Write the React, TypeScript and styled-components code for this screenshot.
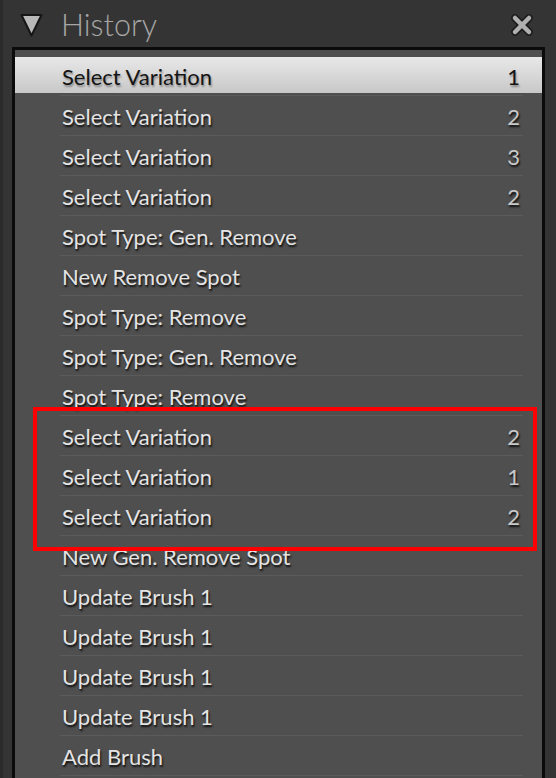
import React from "react";
import styled, { createGlobalStyle } from "styled-components";

const GlobalStyle = createGlobalStyle`
  html, body {
    margin: 0;
    padding: 0;
    background: #333333;
  }
  * { box-sizing: border-box; }
`;

const Panel = styled.div`
  position: relative;
  width: 556px;
  height: 778px;
  overflow: hidden;
  background: #343434;
  border-left: 3px solid #2b2b2b;
  display: flex;
  flex-direction: column;
  font-family: "Lato", "Noto Sans", sans-serif;
`;

const Header = styled.div`
  height: 47px;
  flex: 0 0 47px;
  display: flex;
  align-items: center;
  padding: 3px 22px 0 17px;
`;

const Title = styled.div`
  margin-left: 18px;
  font-size: 30.5px;
  font-weight: 300;
  color: #a6a6a6;
  line-height: 1;
  padding-bottom: 2px;
`;

const Close = styled.div`
  margin-left: auto;
  display: flex;
  padding-bottom: 1px;
`;

const ListBox = styled.div`
  flex: 1;
  margin: 0 11px 0 9px;
  border: 3px solid #0b0b0b;
  border-bottom: none;
  background: #4f4f4f;
  padding-top: 7px;
  overflow: hidden;
`;

const Row = styled.div<{ $selected?: boolean }>`
  height: 36px;
  display: flex;
  align-items: center;
  padding: 2px 22px 0 47px;
  font-size: 22px;
  background: ${(p) =>
    p.$selected ? "linear-gradient(#e8e8e8, #c8c8c8)" : "transparent"};
  color: ${(p) => (p.$selected ? "#141414" : "#e4e4e4")};
  text-shadow: ${(p) =>
    p.$selected
      ? "1px 2px 2px rgba(0,0,0,0.35)"
      : "1px 2px 2px rgba(0,0,0,0.85)"};
`;

const Label = styled.span`
  flex: 1;
  white-space: nowrap;
`;

const Count = styled.span<{ $selected?: boolean }>`
  color: ${(p) => (p.$selected ? "#141414" : "#c9c9c9")};
`;

const Separator = styled.div`
  height: 1px;
  margin: 2px 19px 1px 45px;
  background: #5b5b5b;
`;

const Highlight = styled.div`
  position: absolute;
  left: 30px;
  top: 407px;
  width: 504px;
  height: 144px;
  border: 4px solid #ff0000;
  pointer-events: none;
`;

type Item = { label: string; count?: number };

const items: Item[] = [
  { label: "Select Variation", count: 1 },
  { label: "Select Variation", count: 2 },
  { label: "Select Variation", count: 3 },
  { label: "Select Variation", count: 2 },
  { label: "Spot Type: Gen. Remove" },
  { label: "New Remove Spot" },
  { label: "Spot Type: Remove" },
  { label: "Spot Type: Gen. Remove" },
  { label: "Spot Type: Remove" },
  { label: "Select Variation", count: 2 },
  { label: "Select Variation", count: 1 },
  { label: "Select Variation", count: 2 },
  { label: "New Gen. Remove Spot" },
  { label: "Update Brush 1" },
  { label: "Update Brush 1" },
  { label: "Update Brush 1" },
  { label: "Update Brush 1" },
  { label: "Add Brush" },
];

const Triangle = () => (
  <svg width="23" height="26" viewBox="0 0 23 26">
    <polygon
      points="1.5,3 21.5,3 11.5,23.5"
      fill="#b9b9b9"
      stroke="#161616"
      strokeWidth="2"
      strokeLinejoin="round"
    />
  </svg>
);

const CloseIcon = () => (
  <svg width="24" height="22" viewBox="0 0 24 22">
    <g strokeLinecap="round">
      <line x1="5" y1="4" x2="19" y2="18" stroke="#1c1c1c" strokeWidth="7.5" />
      <line x1="19" y1="4" x2="5" y2="18" stroke="#1c1c1c" strokeWidth="7.5" />
      <line x1="5" y1="4" x2="19" y2="18" stroke="#b0b0b0" strokeWidth="4.5" />
      <line x1="19" y1="4" x2="5" y2="18" stroke="#b0b0b0" strokeWidth="4.5" />
    </g>
  </svg>
);

export default function App() {
  return (
    <>
      <GlobalStyle />
      <Panel>
        <Header>
          <Triangle />
          <Title>History</Title>
          <Close>
            <CloseIcon />
          </Close>
        </Header>
        <ListBox>
          {items.map((it, i) => (
            <React.Fragment key={i}>
              <Row $selected={i === 0}>
                <Label>{it.label}</Label>
                {it.count !== undefined && (
                  <Count $selected={i === 0}>{it.count}</Count>
                )}
              </Row>
              <Separator />
            </React.Fragment>
          ))}
        </ListBox>
        <Highlight />
      </Panel>
    </>
  );
}
